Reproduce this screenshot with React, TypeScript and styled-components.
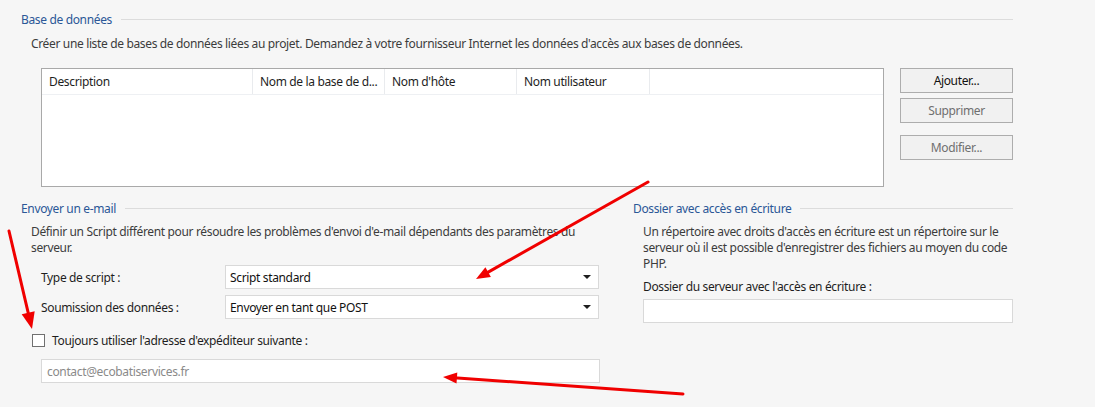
import styled, { createGlobalStyle } from "styled-components";

const GlobalStyle = createGlobalStyle`
  html, body {
    margin: 0;
    padding: 0;
    background: #f6f6f6;
  }
  body {
    font-family: "Noto Sans", "Open Sans", sans-serif;
    font-size: 12px;
    letter-spacing: -0.35px;
    color: #1e1e1e;
  }
`;

const Page = styled.div`
  position: relative;
  width: 1095px;
  height: 407px;
  overflow: hidden;
  box-sizing: border-box;
  padding: 11px 82px 0 21px;
`;

const Legend = styled.div`
  display: flex;
  align-items: center;
  height: 16px;
  color: #2b5797;
  white-space: nowrap;

  &::after {
    content: "";
    flex: 1;
    height: 1px;
    margin-left: 9px;
    background: #dcdcdc;
  }
`;

const Note = styled.p<{ $top?: number }>`
  margin: ${(p) => p.$top ?? 4}px 0 0 10px;
  line-height: 16px;
  color: #3c3c3c;
`;

const TableRow = styled.div`
  display: flex;
  gap: 16px;
  margin: 16px 0 0 20px;
`;

const Table = styled.div`
  width: 843px;
  height: 119px;
  box-sizing: border-box;
  border: 1px solid #a9a9a9;
  background: #fff;
`;

const HeaderRow = styled.div`
  display: grid;
  grid-template-columns: 211px 132px 132px 133px 1fr;
  height: 25px;
  border-bottom: 1px solid #eef0f3;
`;

const HeaderCell = styled.div`
  display: flex;
  align-items: center;
  padding-left: 7px;
  border-right: 1px solid #e9ebee;
  color: #1e1e1e;
  white-space: nowrap;
  overflow: hidden;

  &:last-child {
    border-right: none;
  }
`;

const ButtonColumn = styled.div`
  display: flex;
  flex-direction: column;
  width: 113px;
`;

const Button = styled.button<{ $disabled?: boolean; $gap?: number }>`
  height: 25px;
  margin-top: ${(p) => p.$gap ?? 0}px;
  box-sizing: border-box;
  border: 1px solid #adadad;
  background: #f1f1f1;
  font: inherit;
  letter-spacing: inherit;
  color: ${(p) => (p.$disabled ? "#6f6f6f" : "#111")};
  padding: 0;
`;

const Columns = styled.div`
  display: flex;
  gap: 23px;
  margin-top: 13px;
`;

const LeftColumn = styled.div`
  width: 590px;
`;

const RightColumn = styled.div`
  width: 380px;
`;

const Fields = styled.div`
  display: grid;
  grid-template-columns: 184px 374px;
  row-gap: 6px;
  margin: 9px 0 0 20px;
`;

const FieldLabel = styled.label`
  display: flex;
  align-items: center;
  height: 24px;
  color: #1e1e1e;
`;

const Select = styled.div`
  position: relative;
  display: flex;
  align-items: center;
  height: 24px;
  box-sizing: border-box;
  padding: 0 0 0 4px;
  border: 1px solid #d9d9d9;
  background: #fff;
  color: #111;

  &::after {
    content: "";
    position: absolute;
    right: 7px;
    top: 9px;
    border-left: 4px solid transparent;
    border-right: 4px solid transparent;
    border-top: 4px solid #1e1e1e;
  }
`;

const CheckRow = styled.label`
  display: flex;
  align-items: center;
  gap: 7px;
  height: 16px;
  margin: 13px 0 0 11px;
  color: #1e1e1e;
`;

const Box = styled.span`
  width: 13px;
  height: 13px;
  box-sizing: border-box;
  border: 1px solid #707070;
  background: #fff;
`;

const TextInput = styled.div<{ $left: number; $width: number; $top: number }>`
  display: flex;
  align-items: center;
  width: ${(p) => p.$width}px;
  height: 24px;
  margin: ${(p) => p.$top}px 0 0 ${(p) => p.$left}px;
  box-sizing: border-box;
  padding-left: 5px;
  border: 1px solid #d9d9d9;
  background: #fff;
  color: #8a8a8a;
`;

const RightNote = styled(Note)`
  width: 370px;
`;

const RightLabel = styled.div`
  margin: 7px 0 0 10px;
  line-height: 16px;
  color: #1e1e1e;
`;

const Arrows = styled.svg`
  position: absolute;
  left: 0;
  top: 0;
  pointer-events: none;
`;

function Arrow({ x1, y1, x2, y2, size = 15 }: { x1: number; y1: number; x2: number; y2: number; size?: number }) {
  const angle = Math.atan2(y2 - y1, x2 - x1);
  const spread = 0.38;
  const ax = x2 - size * Math.cos(angle - spread);
  const ay = y2 - size * Math.sin(angle - spread);
  const bx = x2 - size * Math.cos(angle + spread);
  const by = y2 - size * Math.sin(angle + spread);
  const sx = x2 - (size - 4) * Math.cos(angle);
  const sy = y2 - (size - 4) * Math.sin(angle);
  return (
    <g>
      <line x1={x1} y1={y1} x2={sx} y2={sy} stroke="#f00000" strokeWidth={3} strokeLinecap="round" />
      <polygon points={`${x2},${y2} ${ax},${ay} ${bx},${by}`} fill="#f00000" />
    </g>
  );
}

export default function App() {
  return (
    <>
      <GlobalStyle />
      <Page>
        <Legend>Base de données</Legend>
        <Note $top={9}>
          Créer une liste de bases de données liées au projet. Demandez à votre fournisseur Internet les données d'accès aux bases de données.
        </Note>
        <TableRow>
          <Table>
            <HeaderRow>
              <HeaderCell>Description</HeaderCell>
              <HeaderCell>Nom de la base de d...</HeaderCell>
              <HeaderCell>Nom d'hôte</HeaderCell>
              <HeaderCell>Nom utilisateur</HeaderCell>
              <HeaderCell />
            </HeaderRow>
          </Table>
          <ButtonColumn>
            <Button>Ajouter...</Button>
            <Button $disabled $gap={5}>Supprimer</Button>
            <Button $disabled $gap={12}>Modifier...</Button>
          </ButtonColumn>
        </TableRow>

        <Columns>
          <LeftColumn>
            <Legend>Envoyer un e-mail</Legend>
            <Note $top={8}>
              Définir un Script différent pour résoudre les problèmes d'envoi d'e-mail dépendants des paramètres du serveur.
            </Note>
            <Fields>
              <FieldLabel>Type de script :</FieldLabel>
              <Select>Script standard</Select>
              <FieldLabel>Soumission des données :</FieldLabel>
              <Select>Envoyer en tant que POST</Select>
            </Fields>
            <CheckRow>
              <Box />
              Toujours utiliser l'adresse d'expéditeur suivante :
            </CheckRow>
            <TextInput $left={20} $width={559} $top={11}>
              contact@ecobatiservices.fr
            </TextInput>
          </LeftColumn>
          <RightColumn>
            <Legend>Dossier avec accès en écriture</Legend>
            <RightNote $top={8}>
              Un répertoire avec droits d'accès en écriture est un répertoire sur le serveur où il est possible d'enregistrer des fichiers au moyen du code PHP.
            </RightNote>
            <RightLabel>Dossier du serveur avec l'accès en écriture :</RightLabel>
            <TextInput $left={10} $width={370} $top={4} />
          </RightColumn>
        </Columns>

        <Arrows width={1095} height={407} viewBox="0 0 1095 407">
          <Arrow x1={648} y1={182} x2={476} y2={279} />
          <Arrow x1={9} y1={231} x2={32} y2={329} size={18} />
          <Arrow x1={683} y1={394} x2={443} y2={377} />
        </Arrows>
      </Page>
    </>
  );
}
